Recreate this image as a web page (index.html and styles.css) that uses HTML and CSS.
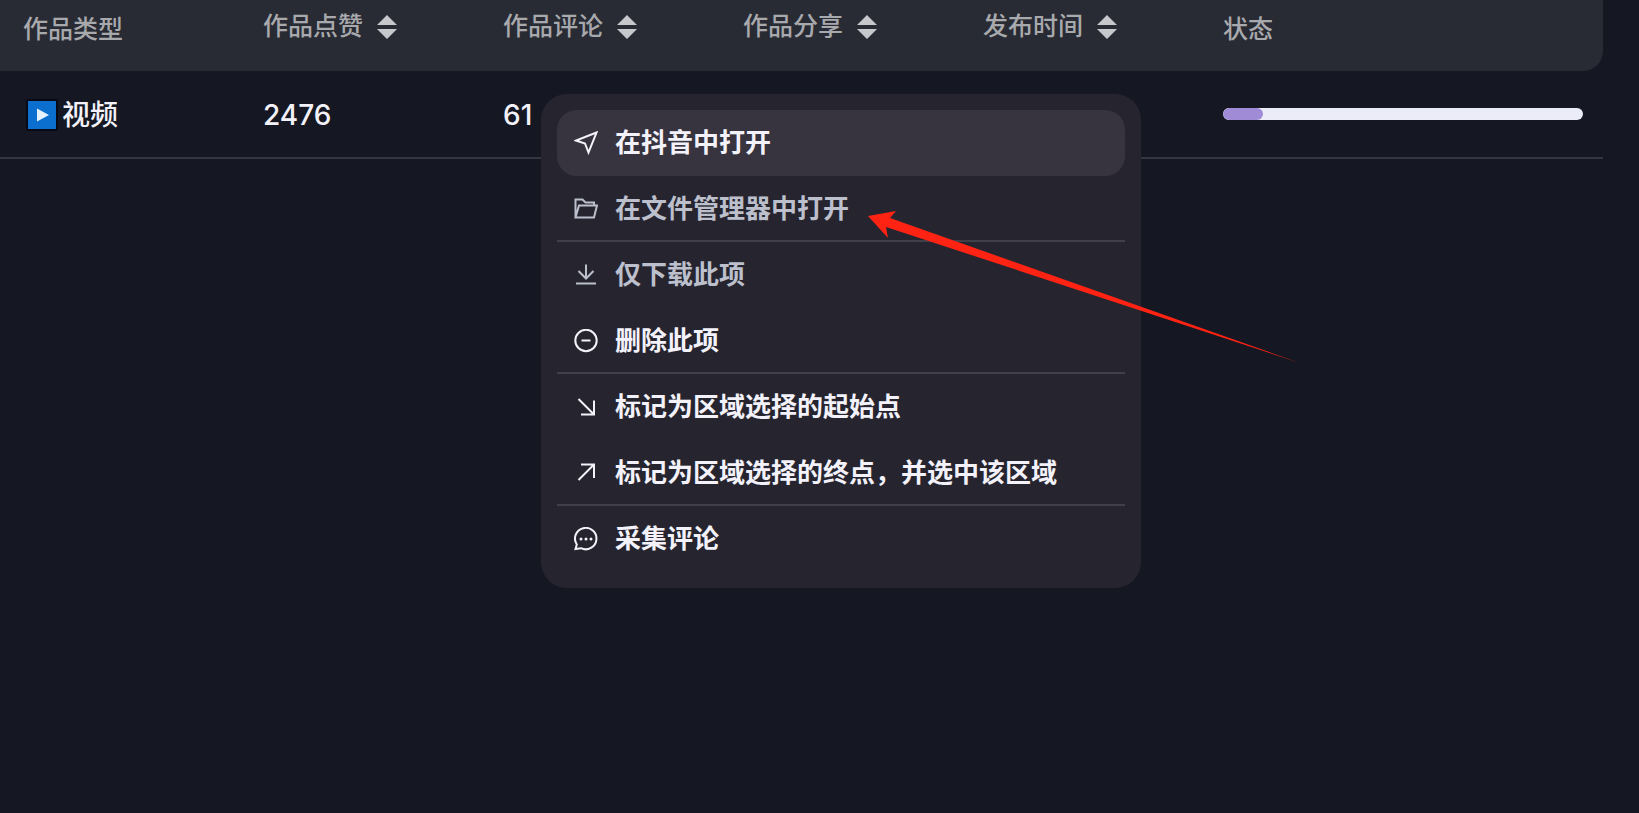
FILE: index.html
```
<!DOCTYPE html>
<html lang="zh-CN">
<head>
  <meta charset="UTF-8" />
  <meta name="viewport" content="width=device-width, initial-scale=1.0" />
  <title>作品列表</title>
  <link rel="stylesheet" href="styles.css">
</head>
<body>
  <main class="works">
    <table class="works-table">
      <colgroup>
        <col class="col" span="5">
        <col>
      </colgroup>
      <thead>
        <tr>
          <th scope="col">作品类型</th>
          <th scope="col">
            <button class="sort" type="button">作品点赞
              <svg class="sort__icon" viewBox="0 0 20 24" aria-hidden="true"><path d="M10 0l10 10H0zM0 14h20L10 24z" /></svg>
            </button>
          </th>
          <th scope="col">
            <button class="sort" type="button">作品评论
              <svg class="sort__icon" viewBox="0 0 20 24" aria-hidden="true"><path d="M10 0l10 10H0zM0 14h20L10 24z" /></svg>
            </button>
          </th>
          <th scope="col">
            <button class="sort" type="button">作品分享
              <svg class="sort__icon" viewBox="0 0 20 24" aria-hidden="true"><path d="M10 0l10 10H0zM0 14h20L10 24z" /></svg>
            </button>
          </th>
          <th scope="col">
            <button class="sort" type="button">发布时间
              <svg class="sort__icon" viewBox="0 0 20 24" aria-hidden="true"><path d="M10 0l10 10H0zM0 14h20L10 24z" /></svg>
            </button>
          </th>
          <th scope="col">状态</th>
        </tr>
      </thead>
      <tbody>
        <tr>
          <td>
            <span class="type">
              <svg class="type__icon" viewBox="0 0 32 32" aria-hidden="true">
                <rect width="32" height="32" rx="2" fill="#070a16" />
                <rect x="2" y="2" width="28" height="28" fill="#0a6fce" />
                <path d="M11 9.500v13L23 16z" fill="#e6f3ff" />
              </svg>
              视频
            </span>
          </td>
          <td>2476</td>
          <td>61</td>
          <td></td>
          <td></td>
          <td class="status"><progress class="progress" value="11" max="100" aria-label="下载进度"></progress></td>
        </tr>
      </tbody>
    </table>
  </main>

  <div class="menu" role="menu">
    <button class="menu__item menu__item--active" role="menuitem" type="button">
      <svg class="menu__icon" viewBox="0 0 24 24" aria-hidden="true"><path d="M22.500 1.500L2 9.500l9 3 3.500 9z" /></svg>
      在抖音中打开
    </button>
    <button class="menu__item" role="menuitem" type="button" disabled>
      <svg class="menu__icon" viewBox="0 0 24 24" aria-hidden="true"><path d="M1.500 20.500V2.500H8.500L11.500 5.500H20V8.500M1.500 20.500L5 8.500H23L20 20.500z" /></svg>
      在文件管理器中打开
    </button>
    <hr class="menu__divider">
    <button class="menu__item" role="menuitem" type="button" disabled>
      <svg class="menu__icon" viewBox="0 0 24 24" aria-hidden="true"><path d="M12 1.500V15M4.500 8L12 15.500 19.500 8M2 20.500H22" /></svg>
      仅下载此项
    </button>
    <button class="menu__item" role="menuitem" type="button">
      <svg class="menu__icon" viewBox="0 0 24 24" aria-hidden="true"><circle cx="12" cy="11.500" r="10.700" /><path d="M7.500 11.500h9" /></svg>
      删除此项
    </button>
    <hr class="menu__divider">
    <button class="menu__item" role="menuitem" type="button">
      <svg class="menu__icon" viewBox="0 0 24 24" aria-hidden="true"><path d="M4.500 4L20 19.500M20 5.500V19.500H7" /></svg>
      标记为区域选择的起始点
    </button>
    <button class="menu__item" role="menuitem" type="button">
      <svg class="menu__icon" viewBox="0 0 24 24" aria-hidden="true"><path d="M4.500 19L20 3.500M7 3.500H20V17" /></svg>
      标记为区域选择的终点，并选中该区域
    </button>
    <hr class="menu__divider">
    <button class="menu__item" role="menuitem" type="button">
      <svg class="menu__icon" viewBox="0 0 24 24" aria-hidden="true">
        <path d="M1.500 22l1.300-4.500A10.700 10.700 0 1 1 7 21.200z" />
        <g class="menu__dots"><circle cx="7" cy="12" r="1.500" /><circle cx="12" cy="12" r="1.500" /><circle cx="17" cy="12" r="1.500" /></g>
      </svg>
      采集评论
    </button>
  </div>

  <svg class="pointer" viewBox="0 0 434 156" aria-hidden="true">
    <path d="M0 9L28 4 22 11 432 156 18 20 20 31z" />
  </svg>
</body>
</html>
```

FILE: styles.css
```
:root {
  --bg: #151822;
  --header-bg: #282b33;
  --header-text: #a8a9ad;
  --text: #f3f2fb;
  --line: #33353f;
  --menu-bg: #26252f;
  --menu-active: #37343f;
  --menu-line: #413f4a;
  --menu-disabled: #bcbfcc;
  --pointer: #ff2313;
}
* {
  box-sizing: border-box;
  margin: 0;
  padding: 0;
}
body {
  min-height: 100vh;
  background: var(--bg);
  color: var(--text);
  font-family: Inter, 'Noto Sans CJK SC', sans-serif;
  font-weight: 500;
  overflow: hidden;
}
button {
  border: none;
  background: none;
  color: inherit;
  font: inherit;
  cursor: pointer;
}
.works {
  padding-right: 36px;
}
.works-table {
  width: 100%;
  table-layout: fixed;
  border-collapse: separate;
  border-spacing: 0;
  text-align: left;
}
.col {
  width: 240px;
}
th {
  height: 71px;
  padding: 10px 20px 0 23px;
  background: var(--header-bg);
  color: var(--header-text);
  font-size: 25px;
  font-weight: 500;
  line-height: 38px;
  vertical-align: top;
}
th:last-child {
  border-bottom-right-radius: 20px;
}
.sort {
  display: flex;
  align-items: center;
  gap: 14px;
  line-height: 33px;
}
.sort__icon {
  width: 20px;
  height: 24px;
  fill: #c6c8cc;
}
td {
  height: 88px;
  padding: 2px 20px 0 23px;
  border-bottom: 2px solid var(--line);
  font-size: 28px;
  line-height: 40px;
  vertical-align: middle;
}
.status {
  padding-top: 0;
}
.type {
  display: flex;
  align-items: center;
  gap: 4px;
  padding-left: 3px;
}
.type__icon {
  width: 32px;
  height: 32px;
}
.progress {
  display: block;
  width: 100%;
  height: 12px;
  border: none;
  border-radius: 6px;
  background: #ebecf8;
  overflow: hidden;
  appearance: none;
  -webkit-appearance: none;
}
.progress::-webkit-progress-bar {
  background: #ebecf8;
}
.progress::-webkit-progress-value {
  border-radius: 6px;
  background: #a08cd6;
}
.menu {
  position: absolute;
  top: 94px;
  left: 541px;
  display: flex;
  flex-direction: column;
  width: 600px;
  padding: 16px;
  border-radius: 26px;
  background: var(--menu-bg);
}
.menu__item {
  display: flex;
  align-items: center;
  gap: 17px;
  height: 66px;
  padding: 0 17px;
  border-radius: 20px;
  font-size: 26px;
  font-weight: 600;
  line-height: 40px;
  text-align: left;
}
.menu__item:hover,
.menu__item--active {
  background: var(--menu-active);
}
.menu__item:disabled {
  background: none;
  color: var(--menu-disabled);
  cursor: default;
}
.menu__icon {
  width: 24px;
  height: 24px;
  fill: none;
  stroke: currentColor;
  stroke-width: 2;
}
.menu__dots {
  fill: currentColor;
  stroke: none;
}
.menu__divider {
  height: 2px;
  margin-top: -2px;
  border: none;
  background: var(--menu-line);
}
.pointer {
  position: absolute;
  top: 207px;
  left: 868px;
  width: 434px;
  fill: var(--pointer);
  pointer-events: none;
}
```
